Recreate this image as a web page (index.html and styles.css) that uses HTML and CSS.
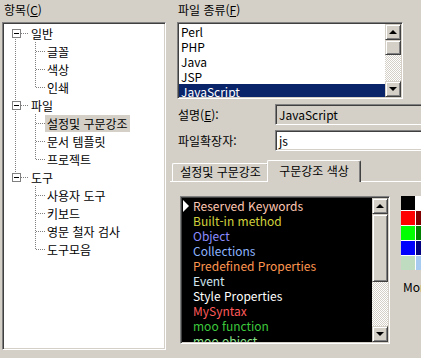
FILE: index.html
```html
<!DOCTYPE html>
<html lang="ko">
  <head>
    <meta charset="UTF-8" />
    <meta name="viewport" content="width=device-width, initial-scale=1.0" />
    <title>설정</title>
    <link rel="stylesheet" href="styles.css">
  </head>
  <body>
    <div class="dialog">
      <div class="left">
        <p class="caption">항목(<u>C</u>)</p>
        <div class="tree">
          <div class="node">
            <div class="row root"><span class="pm"></span><span class="hdot"></span><span class="lbl">일반</span></div>
            <div class="kids">
              <div class="row"><span class="hdot long"></span><span class="lbl">글꼴</span></div>
              <div class="row"><span class="hdot long"></span><span class="lbl">색상</span></div>
              <div class="row"><span class="hdot long"></span><span class="lbl">인쇄</span></div>
            </div>
          </div>
          <div class="node">
            <div class="row root"><span class="pm"></span><span class="hdot"></span><span class="lbl">파일</span></div>
            <div class="kids">
              <div class="row"><span class="hdot long"></span><span class="lbl selected">설정및 구문강조</span></div>
              <div class="row"><span class="hdot long"></span><span class="lbl">문서 템플릿</span></div>
              <div class="row"><span class="hdot long"></span><span class="lbl">프로젝트</span></div>
            </div>
          </div>
          <div class="node">
            <div class="row root"><span class="pm"></span><span class="hdot"></span><span class="lbl">도구</span></div>
            <div class="kids four">
              <div class="row"><span class="hdot long"></span><span class="lbl">사용자 도구</span></div>
              <div class="row"><span class="hdot long"></span><span class="lbl">키보드</span></div>
              <div class="row"><span class="hdot long"></span><span class="lbl">영문 철자 검사</span></div>
              <div class="row"><span class="hdot long"></span><span class="lbl">도구모음</span></div>
            </div>
          </div>
        </div>
      </div>

      <div class="right">
        <p class="caption">파일 종류(<u>F</u>)</p>
        <div class="listbox types">
          <div class="items">
            <div class="item">Perl</div>
            <div class="item">PHP</div>
            <div class="item">Java</div>
            <div class="item">JSP</div>
            <div class="item active">JavaScript</div>
          </div>
          <div class="vscroll">
            <span class="sbtn"><span class="arrow up"></span></span>
            <span class="thumb short"></span>
            <span class="track"></span>
            <span class="sbtn"><span class="arrow down"></span></span>
          </div>
        </div>

        <div class="field-row">
          <label>설명(<u>E</u>):</label>
          <div class="field readonly">JavaScript</div>
        </div>
        <div class="field-row">
          <label>파일확장자:</label>
          <div class="field">js</div>
        </div>

        <div class="tabs">
          <div class="tab">설정및 구문강조</div>
          <div class="tab current">구문강조 색상</div>
        </div>
        <div class="panel">
          <div class="listbox colors">
            <div class="items">
              <div class="citem"><span class="mark"></span><span class="c1">Reserved Keywords</span></div>
              <div class="citem"><span class="c2">Built-in method</span></div>
              <div class="citem"><span class="c3">Object</span></div>
              <div class="citem"><span class="c4">Collections</span></div>
              <div class="citem"><span class="c5">Predefined Properties</span></div>
              <div class="citem"><span class="c6">Event</span></div>
              <div class="citem"><span class="c7">Style Properties</span></div>
              <div class="citem"><span class="c8">MySyntax</span></div>
              <div class="citem"><span class="c9">moo function</span></div>
              <div class="citem"><span class="c10">moo object</span></div>
            </div>
            <div class="vscroll">
              <span class="sbtn"><span class="arrow up"></span></span>
              <span class="thumb long"></span>
              <span class="track"></span>
              <span class="sbtn"><span class="arrow down"></span></span>
            </div>
          </div>
          <div class="palette">
            <div class="swatches">
              <span class="sw" style="background:#000000"></span>
              <span class="sw" style="background:#ffffff"></span>
              <span class="sw" style="background:#ff0000"></span>
              <span class="sw" style="background:#800000"></span>
              <span class="sw" style="background:#00ff00"></span>
              <span class="sw" style="background:#008000"></span>
              <span class="sw" style="background:#0000ff"></span>
              <span class="sw" style="background:#000080"></span>
              <span class="sw" style="background:#c0dcc0"></span>
              <span class="sw" style="background:#a6caf0"></span>
            </div>
            <p class="more">More Colors...</p>
          </div>
        </div>
      </div>
    </div>
  </body>
</html>
```

FILE: styles.css
```css
* {
  margin: 0;
  padding: 0;
  box-sizing: border-box;
}
body {
  background: #d4d0c8;
  font-family: "Noto Sans CJK KR", "Noto Sans", sans-serif;
  font-size: 12px;
  color: #000;
  overflow: hidden;
}
.dialog {
  display: grid;
  grid-template-columns: 170px 251px;
  height: 358px;
}
.caption {
  line-height: 14px;
  padding-top: 3px;
}
u {
  text-decoration: underline;
  text-underline-offset: 1px;
}

/* tree */
.left .caption {
  padding-left: 4px;
}
.tree {
  margin: 5px 0 0 2px;
  width: 164px;
  height: 328px;
  background: #fff;
  border: 1px solid;
  border-color: #808080 #fff #fff #808080;
  box-shadow: inset 1px 1px #404040, inset -1px -1px #d4d0c8;
  padding: 1px;
  background-image: repeating-linear-gradient(#808080 0 1px, transparent 1px 2px);
  background-size: 1px 135px;
  background-position: 12px 14px;
  background-repeat: no-repeat;
}
.row {
  display: flex;
  align-items: center;
  height: 18px;
  white-space: nowrap;
}
.root {
  padding-left: 8px;
}
.pm {
  width: 9px;
  height: 9px;
  border: 1px solid #808080;
  background: #fff linear-gradient(#000, #000) center / 5px 1px no-repeat;
}
.hdot {
  width: 7px;
  height: 1px;
  background: repeating-linear-gradient(to right, #808080 0 1px, transparent 1px 2px);
}
.hdot.long {
  width: 9px;
}
.root .lbl {
  margin-left: 1px;
}
.lbl {
  line-height: 17px;
  padding: 0 2px;
}
.lbl.selected {
  background: #d4d0c8;
}
.kids {
  padding-left: 32px;
  background-image: repeating-linear-gradient(#808080 0 1px, transparent 1px 2px);
  background-size: 1px 45px;
  background-position: 31px 0;
  background-repeat: no-repeat;
}
.kids.four {
  background-size: 1px 63px;
}

/* right side */
.right {
  overflow: hidden;
}
.right .caption {
  padding-left: 8px;
}
.listbox {
  display: flex;
  border: 1px solid;
  border-color: #808080 #fff #fff #808080;
  box-shadow: inset 1px 1px #404040, inset -1px -1px #d4d0c8;
  padding: 1px;
}
.types {
  margin: 5px 0 0 7px;
  width: 226px;
  height: 77px;
  background: #fff;
}
.items {
  flex: 1;
  overflow: hidden;
}
.item {
  height: 15px;
  line-height: 15px;
  padding-left: 2px;
}
.item.active {
  background: #0a246a;
  color: #fff;
}
.vscroll {
  width: 16px;
  display: flex;
  flex-direction: column;
}
.sbtn,
.thumb {
  display: flex;
  align-items: center;
  justify-content: center;
  height: 16px;
  background: #d4d0c8;
  border: 1px solid;
  border-color: #d4d0c8 #404040 #404040 #d4d0c8;
  box-shadow: inset 1px 1px #fff, inset -1px -1px #808080;
}
.thumb.short {
  height: 15px;
}
.thumb.long {
  height: 68px;
}
.track {
  flex: 1;
  background: repeating-conic-gradient(#fff 0 25%, #d4d0c8 0 50%) 0 0 / 2px 2px;
}
.arrow {
  width: 0;
  height: 0;
  border-left: 4px solid transparent;
  border-right: 4px solid transparent;
}
.arrow.up {
  border-bottom: 4px solid #000;
}
.arrow.down {
  border-top: 4px solid #000;
}

.field-row {
  display: flex;
  align-items: center;
  margin-top: 5px;
  padding-left: 8px;
  height: 21px;
}
.field-row label {
  width: 97px;
  flex-shrink: 0;
}
.field {
  width: 180px;
  flex-shrink: 0;
  height: 21px;
  line-height: 17px;
  padding: 1px 3px;
  background: #fff;
  border: 1px solid;
  border-color: #808080 #fff #fff #808080;
  box-shadow: inset 1px 1px #404040, inset -1px -1px #d4d0c8;
}
.field.readonly {
  background: #d4d0c8;
}

/* tabs */
.tabs {
  display: flex;
  align-items: flex-end;
  height: 21px;
  margin-top: 9px;
  padding-left: 2px;
}
.tab {
  height: 18px;
  line-height: 16px;
  width: 97px;
  text-align: center;
  border: 1px solid;
  border-bottom: 0;
  border-color: #fff #404040 #fff #fff;
  box-shadow: inset -1px 0 #808080;
  border-radius: 2px 2px 0 0;
}
.tab.current {
  position: relative;
  z-index: 1;
  height: 22px;
  width: 94px;
  margin-left: -2px;
  margin-bottom: -1px;
  line-height: 19px;
  background: #d4d0c8;
}
.panel {
  border-top: 1px solid #fff;
  display: flex;
  gap: 10px;
  padding: 14px 0 0 10px;
}
.colors {
  width: 210px;
  height: 148px;
  background: #000;
  flex-shrink: 0;
}
.citem {
  display: flex;
  align-items: center;
  height: 15px;
  line-height: 15px;
  padding-left: 11px;
  white-space: nowrap;
}
.mark {
  width: 0;
  height: 0;
  margin-left: -10px;
  margin-right: 4px;
  border-top: 6px solid transparent;
  border-bottom: 6px solid transparent;
  border-left: 6px solid #fff;
}
.c1 { color: #ffc8b4; }
.c2 { color: #d2d23c; }
.c3 { color: #8c8cff; }
.c4 { color: #8cb4ff; }
.c5 { color: #ff9650; }
.c6 { color: #d2e6f0; }
.c7 { color: #ffffff; }
.c8 { color: #ff5a5a; }
.c9 { color: #3cc83c; }
.c10 { color: #8ce68c; }

.palette {
  flex-shrink: 0;
  padding-left: 1px;
}
.swatches {
  display: grid;
  grid-template-columns: 14px 14px;
  grid-auto-rows: 14px;
  gap: 1px;
  background: #fff;
}
.more {
  margin-top: 8px;
  padding-left: 2px;
  white-space: nowrap;
}
```
